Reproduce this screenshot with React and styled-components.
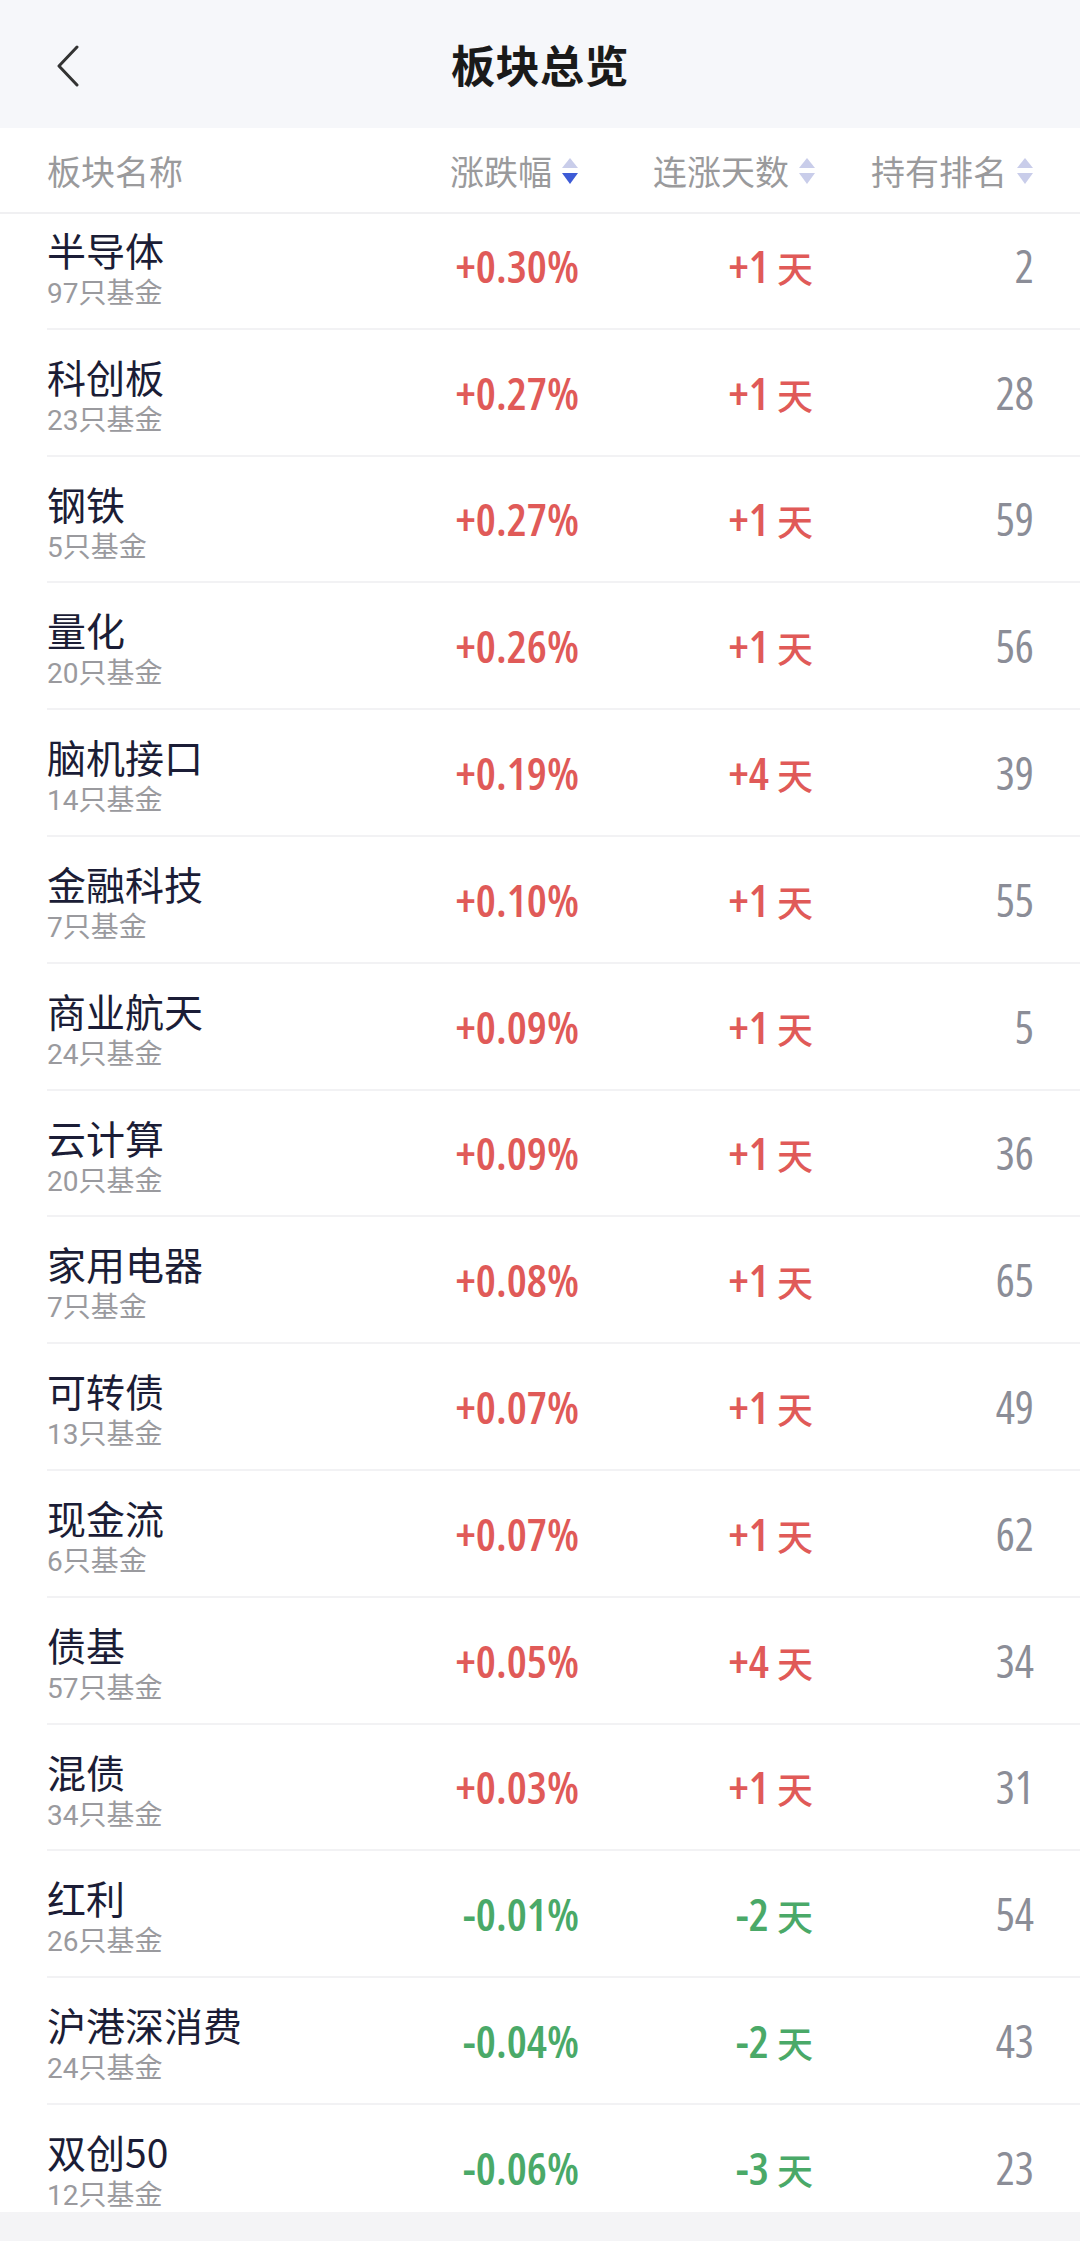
import React from "react";
import styled, { createGlobalStyle } from "styled-components";

const sectors = [
  { name: "半导体", funds: 97, change: "+0.30%", streak: "+1", rank: 2 },
  { name: "科创板", funds: 23, change: "+0.27%", streak: "+1", rank: 28 },
  { name: "钢铁", funds: 5, change: "+0.27%", streak: "+1", rank: 59 },
  { name: "量化", funds: 20, change: "+0.26%", streak: "+1", rank: 56 },
  { name: "脑机接口", funds: 14, change: "+0.19%", streak: "+4", rank: 39 },
  { name: "金融科技", funds: 7, change: "+0.10%", streak: "+1", rank: 55 },
  { name: "商业航天", funds: 24, change: "+0.09%", streak: "+1", rank: 5 },
  { name: "云计算", funds: 20, change: "+0.09%", streak: "+1", rank: 36 },
  { name: "家用电器", funds: 7, change: "+0.08%", streak: "+1", rank: 65 },
  { name: "可转债", funds: 13, change: "+0.07%", streak: "+1", rank: 49 },
  { name: "现金流", funds: 6, change: "+0.07%", streak: "+1", rank: 62 },
  { name: "债基", funds: 57, change: "+0.05%", streak: "+4", rank: 34 },
  { name: "混债", funds: 34, change: "+0.03%", streak: "+1", rank: 31 },
  { name: "红利", funds: 26, change: "-0.01%", streak: "-2", rank: 54 },
  { name: "沪港深消费", funds: 24, change: "-0.04%", streak: "-2", rank: 43 },
  { name: "双创50", funds: 12, change: "-0.06%", streak: "-3", rank: 23 },
];

const columns = [
  { label: "涨跌幅", active: "down" },
  { label: "连涨天数" },
  { label: "持有排名" },
];

const SortIcon = ({ active }) => (
  <svg width="18" height="30" viewBox="0 0 18 30">
    <path d="M9 2 L17 12 L1 12 Z" fill={active === "up" ? "#3d5bd6" : "#c9cdea"} />
    <path d="M1 17 L17 17 L9 28 Z" fill={active === "down" ? "#3d5bd6" : "#c9cdea"} />
  </svg>
);

const App = () => {
  return (
    <Page>
      <GlobalStyle />
      <TopBar>
        <BackButton>
          <svg width="24" height="42" viewBox="0 0 24 42">
            <path
              d="M21 2 L3 21 L21 40"
              fill="none"
              stroke="#333"
              strokeWidth="3"
              strokeLinecap="round"
              strokeLinejoin="round"
            />
          </svg>
        </BackButton>
        <Title>板块总览</Title>
      </TopBar>
      <HeadRow>
        <HeadCell $left>板块名称</HeadCell>
        {columns.map((col) => (
          <HeadCell key={col.label}>
            {col.label}
            <SortIcon active={col.active} />
          </HeadCell>
        ))}
      </HeadRow>
      <ListViewport>
        <List>
          {sectors.map((item) => {
            const up = item.change.startsWith("+");
            return (
              <Row key={item.name}>
                <NameCell>
                  <Name>{item.name}</Name>
                  <Sub>{item.funds}只基金</Sub>
                </NameCell>
                <Value $up={up}>{item.change}</Value>
                <Value $up={up} $pad>
                  {item.streak}
                  <Day>天</Day>
                </Value>
                <Rank>{item.rank}</Rank>
              </Row>
            );
          })}
        </List>
      </ListViewport>
      <BottomBar />
    </Page>
  );
};

export default App;

const GlobalStyle = createGlobalStyle`
  body {
    margin: 0;
    background: #ffffff;
    font-family: "Noto Sans CJK SC", "Noto Sans", sans-serif;
  }
`;

const Page = styled.div`
  width: 1080px;
  height: 2241px;
  display: flex;
  flex-direction: column;
  overflow: hidden;
  background: #ffffff;
`;

const TopBar = styled.div`
  height: 128px;
  flex-shrink: 0;
  background: #f6f7fa;
  display: flex;
  align-items: center;
  justify-content: center;
  position: relative;
`;

const BackButton = styled.div`
  position: absolute;
  left: 56px;
  top: 45px;
  width: 24px;
  height: 42px;
  display: flex;
`;

const Title = styled.div`
  font-size: 44px;
  font-weight: 700;
  color: #1a1a1a;
  letter-spacing: 0.5px;
`;

const grid = `
  display: grid;
  grid-template-columns: 1fr 220px 237px 218px;
  align-items: center;
`;

const HeadRow = styled.div`
  ${grid}
  height: 84px;
  flex-shrink: 0;
  padding: 0 46px 0 47px;
  border-bottom: 2px solid #f0f0f2;
  background: #ffffff;
`;

const HeadCell = styled.div`
  display: flex;
  align-items: center;
  justify-content: ${(p) => (p.$left ? "flex-start" : "flex-end")};
  gap: 9px;
  font-size: 34px;
  color: #9a9a9c;
  svg {
    margin-top: 2px;
  }
`;

const ListViewport = styled.div`
  height: 1998px;
  flex-shrink: 0;
  overflow: hidden;
`;

const List = styled.div`
  margin-top: -11px;
`;

const Row = styled.div`
  ${grid}
  height: 126.8px;
  box-sizing: border-box;
  margin-left: 47px;
  padding-right: 46px;
  border-bottom: 2px solid #f2f2f4;
`;

const NameCell = styled.div`
  align-self: start;
  padding-top: 23px;
  display: flex;
  flex-direction: column;
`;

const Name = styled.div`
  font-size: 39px;
  line-height: 47px;
  color: #1b1d36;
`;

const Sub = styled.div`
  font-size: 28px;
  line-height: 42px;
  color: #9a9a9e;
  font-family: Roboto, "Noto Sans CJK SC", sans-serif;
`;

const Value = styled.div`
  text-align: right;
  padding-right: ${(p) => (p.$pad ? "3px" : "0")};
  font-family: "Open Sans", Roboto, sans-serif;
  font-stretch: 80%;
  font-size: 45px;
  font-weight: 600;
  color: ${(p) => (p.$up ? "#e05a58" : "#4aa968")};
  white-space: nowrap;
`;

const Day = styled.span`
  font-family: "Noto Sans CJK SC", sans-serif;
  font-size: 36px;
  font-weight: 500;
  margin-left: 8px;
`;

const Rank = styled.div`
  text-align: right;
  font-family: "Open Sans", Roboto, sans-serif;
  font-stretch: 80%;
  font-size: 45px;
  font-weight: 500;
  color: #8b8d97;
`;

const BottomBar = styled.div`
  flex: 1;
  background: #f4f4f6;
`;
